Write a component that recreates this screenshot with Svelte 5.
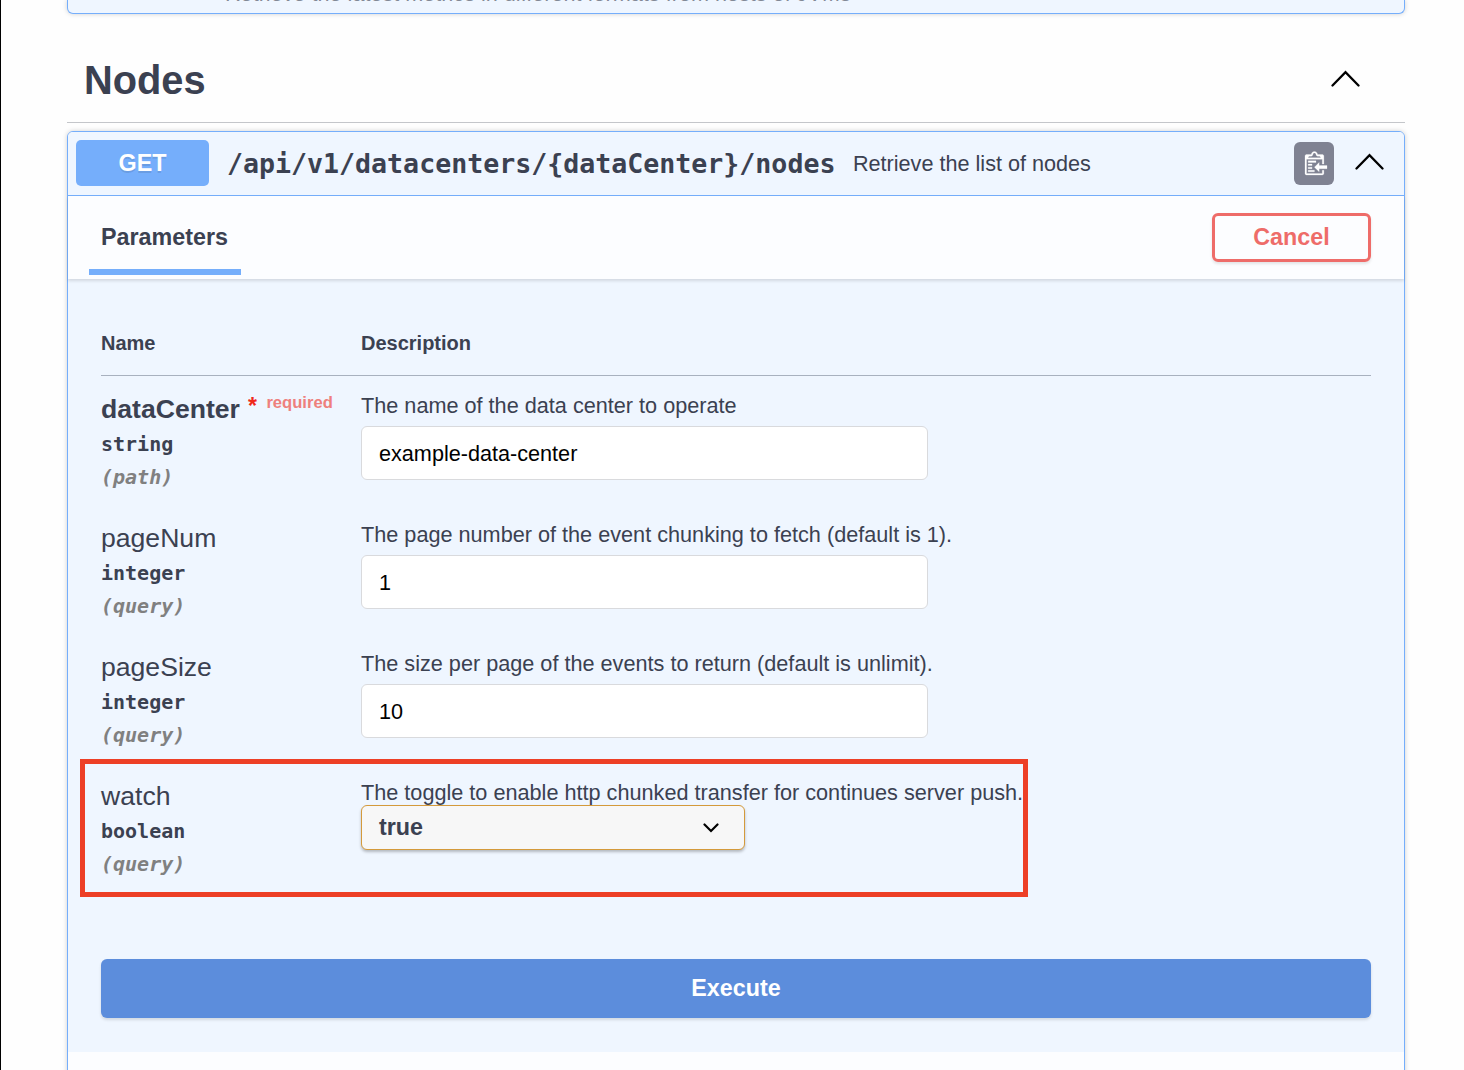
<script>
  const params = [
    { name: 'dataCenter', type: 'string', loc: 'path', required: true, desc: 'The name of the data center to operate', value: 'example-data-center' },
    { name: 'pageNum', type: 'integer', loc: 'query', desc: 'The page number of the event chunking to fetch (default is 1).', value: '1' },
    { name: 'pageSize', type: 'integer', loc: 'query', desc: 'The size per page of the events to return (default is unlimit).', value: '10' },
    { name: 'watch', type: 'boolean', loc: 'query', desc: 'The toggle to enable http chunked transfer for continues server push.', value: 'true', select: true }
  ];
  const path = '/api/v1/datacenters/{dataCenter}/nodes';
</script>

<div class="page">
  <section class="previous"><p>Retrieve the latest metrics in different formats from hosts of JVMs</p></section>

  <header class="tag">
    <h2>Nodes</h2>
    <svg class="chevron" viewBox="0 0 30 18"><path d="M1.500 15.500 L14.500 2.200 L27.500 15.500" /></svg>
  </header>

  <section class="operation">
    <div class="summary">
      <span class="method">GET</span>
      <span class="path">{path}</span>
      <span class="about">Retrieve the list of nodes</span>
      <button class="copy" aria-label="Copy">
        <svg viewBox="2 0 14 16"><path fill-rule="evenodd" d="M4 12h4v1H4v-1zm5-6H4v1h5V6zm2 3V7l-3 3 3 3v-2h5V9h-5zM6.500 8H4v1h2.500V8zM4 11h2.500v-1H4v1zm9 1h1v2c-.02.28-.11.52-.3.7-.19.18-.42.28-.7.3H3c-.55 0-1-.45-1-1V3c0-.55.45-1 1-1h3c0-1.110.89-2 2-2 1.110 0 2 .89 2 2h3c.55 0 1 .45 1 1v5h-1V5H3v9h10v-2zM4 4h8c0-.55-.45-1-1-1h-1c-.55 0-1-.45-1-1s-.45-1-1-1-1 .45-1 1-.45 1-1 1H5c-.55 0-1 .45-1 1z" /></svg>
      </button>
      <svg class="chevron" viewBox="0 0 30 18"><path d="M1.500 15.500 L14.500 2.200 L27.500 15.500" /></svg>
    </div>

    <div class="tabs">
      <span class="tab">Parameters</span>
      <button class="cancel">Cancel</button>
    </div>

    <div class="body">
      <div class="row head"><span>Name</span><span>Description</span></div>
      {#each params as p}
        <div class="row param" class:marked={p.select}>
          <div>
            <div class="name" class:bold={p.required}>{p.name}{#if p.required}<span class="star">*</span><span class="req">required</span>{/if}</div>
            <div class="type">{p.type}</div>
            <div class="loc">({p.loc})</div>
          </div>
          <div>
            <div class="desc" class:tight={p.select}>{p.desc}</div>
            {#if p.select}
              <div class="select">
                <span>{p.value}</span>
                <svg viewBox="0 0 16 10"><path d="M1.500 1.500 L8 8 L14.500 1.500" /></svg>
              </div>
            {:else}
              <input value={p.value} />
            {/if}
          </div>
        </div>
      {/each}
      <button class="execute">Execute</button>
    </div>
  </section>
</div>

<style>
  :global(body) { background: #fefefe; }
  .page, .page *, .marked::after { box-sizing: border-box; }
  .page {
    height: 1070px;
    overflow: hidden;
    border-left: 1px solid #000;
    padding: 0 59px 0 66px;
    color: #3b4151;
    font-family: "Liberation Sans", Arial, sans-serif;
  }
  .previous {
    display: flex;
    align-items: flex-start;
    height: 14px;
    border: 1px solid #75aefb;
    border-top: 0;
    border-radius: 0 0 6px 6px;
    background: #eff6ff;
    box-shadow: 0 0 5px rgba(0, 0, 0, .19);
  }
  .previous p { margin: -19px 0 0 157px; font-size: 21.640px; line-height: 26px; white-space: nowrap; opacity: .6; }
  .tag {
    height: 109px;
    display: flex;
    align-items: center;
    justify-content: space-between;
    padding: 21px 44px 0 17px;
    border-bottom: 1px solid #c4c6ca;
  }
  h2 { margin: 2px 0 0; font-size: 39.800px; line-height: 46px; }
  .chevron { width: 30px; height: 18px; fill: none; stroke: #000; stroke-width: 2.300; stroke-linecap: round; }
  .operation {
    margin-top: 8px;
    height: 960px;
    border: 1px solid #75aefb;
    border-radius: 6px;
    background: #fcfdff;
    box-shadow: 0 0 5px rgba(0, 0, 0, .19);
  }
  .summary {
    height: 64px;
    display: flex;
    align-items: center;
    padding: 0 19px 2px 8px;
    border-bottom: 1px solid #75aefb;
    border-radius: 5px 5px 0 0;
    background: #eff6ff;
  }
  .method {
    width: 133px;
    height: 46px;
    border-radius: 5px;
    background: #75aefb;
    color: #fff;
    font-size: 23.300px;
    line-height: 46px;
    font-weight: 700;
    text-align: center;
    text-shadow: 0 2px 0 rgba(0, 0, 0, .1);
  }
  .path { margin: 2px 0 0 18px; font: 700 26.600px/32px "DejaVu Sans Mono", monospace; white-space: nowrap; }
  .about { margin: 2px 0 0 17.500px; flex: 1; font-size: 21.640px; line-height: 26px; white-space: nowrap; }
  .copy {
    width: 40px;
    height: 43px;
    margin: 2px 21px 0 0;
    padding: 0 0 0 4px;
    border: 0;
    border-radius: 6px;
    background: #7f8292;
    display: flex;
    align-items: center;
    justify-content: center;
  }
  .copy svg { width: 22px; height: 26px; fill: #fff; stroke: #fff; stroke-width: .15; overflow: visible; }
  .summary .chevron { margin-top: -1px; }
  .tabs {
    position: relative;
    height: 83px;
    display: flex;
    justify-content: space-between;
    align-items: flex-start;
    padding: 17px 33px 0 21px;
    box-shadow: 0 2px 3px rgba(0, 0, 0, .12);
  }
  .tab { width: 152px; height: 62px; padding: 10px 0 0 12px; border-bottom: 6px solid #75aefb; font-size: 23.300px; line-height: 28px; font-weight: 700; }
  .cancel {
    width: 159px;
    height: 49px;
    padding: 0 0 2px;
    border: 3px solid #ee6c69;
    border-radius: 6px;
    background: transparent;
    box-shadow: 0 2px 3px rgba(0, 0, 0, .1);
    color: #ee6c69;
    font: 700 23.300px/40px "Liberation Sans", Arial, sans-serif;
  }
  .body { height: 773px; padding: 48px 33px 0; background: #eff6ff; }
  .row { display: grid; grid-template-columns: 260px 1fr; }
  .head { height: 49px; padding-top: 3px; border-bottom: 1px solid #a8b1bf; font-size: 20px; line-height: 26px; font-weight: 700; }
  .param { position: relative; height: 129px; padding-top: 17px; }
  .marked::after {
    content: "";
    position: absolute;
    left: -21px;
    top: -4px;
    width: 948px;
    height: 138px;
    border: 5px solid #ed3f26;
  }
  .name { height: 35px; font-size: 26.600px; line-height: 32px; white-space: nowrap; display: flex; }
  .bold { font-weight: 700; }
  .star { margin: -3px 0 0 8px; color: #f0291b; font-size: 23px; }
  .req { margin: -6px 0 0 9.500px; color: #ee807d; font-size: 16.600px; }
  .type, .loc { font: 700 20px/33px "DejaVu Sans Mono", monospace; }
  .loc { color: #808080; font-style: italic; }
  .desc { height: 33px; font-size: 21.660px; line-height: 26px; white-space: nowrap; }
  .tight { height: 25px; }
  input {
    display: block;
    width: 567px;
    height: 54px;
    padding: 2px 17px 0;
    border: 1px solid #d9dadd;
    border-radius: 6px;
    background: #fff;
    color: #000;
    font: 21.640px "Liberation Sans", Arial, sans-serif;
  }
  .select {
    width: 384px;
    height: 45px;
    padding: 0 25.500px 1px 17px;
    border: 1px solid #d49a3b;
    border-radius: 6px;
    background: #f7f7f7;
    box-shadow: 0 2px 3px rgba(0, 0, 0, .25);
    display: flex;
    align-items: center;
    justify-content: space-between;
    font-size: 23.300px;
    font-weight: 700;
  }
  .select svg { width: 16px; height: 10px; margin-top: 2px; fill: none; stroke: #000; stroke-width: 2.200; stroke-linecap: round; }
  .execute {
    display: block;
    width: 100%;
    height: 59px;
    margin-top: 67px;
    border: 0;
    border-radius: 6px;
    background: #5c8ddc;
    box-shadow: 0 2px 3px rgba(0, 0, 0, .12);
    color: #fff;
    font: 700 23.300px "Liberation Sans", Arial, sans-serif;
  }
</style>
